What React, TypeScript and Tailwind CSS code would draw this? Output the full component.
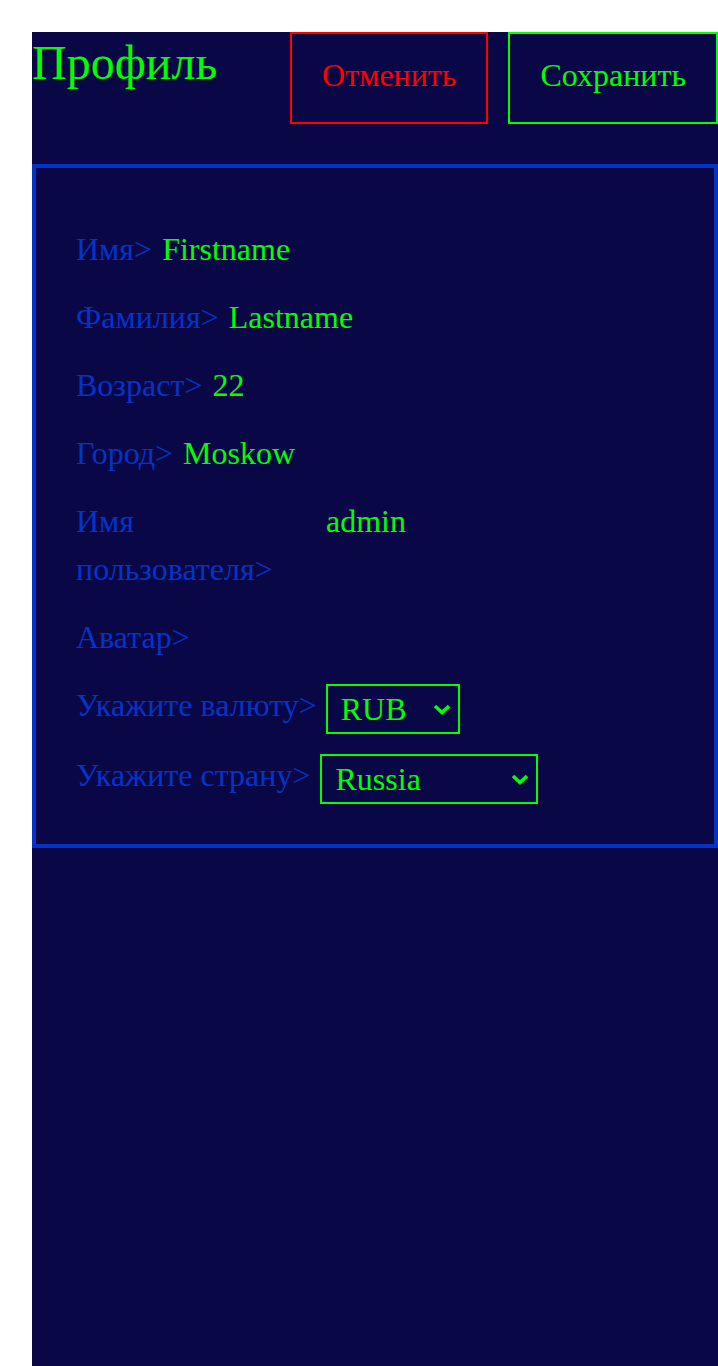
import React from "react";

const serif = { fontFamily: '"Liberation Serif", "Times New Roman", serif' };

function Row({ label, value }: { label: string; value: string }) {
  return (
    <div className="flex gap-[10px] text-[32px] leading-[48px]">
      <span className="text-[#0433c8]">{label}</span>
      <span className="text-[#00ff00]">{value}</span>
    </div>
  );
}

function Chevron() {
  return (
    <svg
      className="pointer-events-none absolute right-[9px] top-1/2 -translate-y-1/2"
      width="18"
      height="12"
      viewBox="0 0 18 12"
      fill="none"
    >
      <path d="M2 3 L9 9.5 L16 3" stroke="#00ff00" strokeWidth="3.6" strokeLinejoin="miter" />
    </svg>
  );
}

function Select({ value, options }: { value: string; options: string[] }) {
  return (
    <div className="relative mt-[3px] flex">
      <select
        defaultValue={value}
        className="h-[50px] appearance-none border-2 border-[#00ff00] pl-[13px] pr-[51px] text-[32px] leading-[36px] text-[#00ff00] outline-none"
      >
        {options.map((o) => (
          <option key={o} value={o} className="bg-[#0a0747]">
            {o}
          </option>
        ))}
      </select>
      <Chevron />
    </div>
  );
}

export default function App() {
  return (
    <div className="bg-white pl-8 pt-8" style={serif}>
      <div className="w-[686px] min-h-[1334px] bg-[#0a0747]">
        <div className="flex items-start justify-between">
          <h1 className="text-[48px] leading-[62px] text-[#00ff00]">Профиль</h1>
          <div className="flex gap-5">
            <button className="h-[92px] border-2 border-[#ff0000] px-[30px] pt-[17px] pb-[23px] text-[32px] leading-[48px] text-[#ff0000]">
              Отменить
            </button>
            <button className="h-[92px] border-2 border-[#00ff00] px-[30px] pt-[17px] pb-[23px] text-[32px] leading-[48px] text-[#00ff00]">
              Сохранить
            </button>
          </div>
        </div>
        <div className="mt-10 border-4 border-[#0433c8] pl-10 pr-10 pt-[57px] pb-10">
          <div className="flex flex-col gap-5">
            <Row label="Имя>" value="Firstname" />
            <Row label="Фамилия>" value="Lastname" />
            <Row label="Возраст>" value="22" />
            <Row label="Город>" value="Moskow" />
            <div className="flex gap-[10px] text-[32px] leading-[48px]">
              <span className="w-[240px] shrink-0 text-[#0433c8]">Имя пользователя&gt;</span>
              <span className="text-[#00ff00]">admin</span>
            </div>
            <div className="flex gap-[10px] text-[32px] leading-[48px]">
              <span className="text-[#0433c8]">Аватар&gt;</span>
            </div>
            <div className="flex items-start gap-[9px] text-[32px] leading-[48px]">
              <span className="text-[#0433c8]">Укажите валюту&gt;</span>
              <Select value="RUB" options={["RUB", "EUR", "USD"]} />
            </div>
            <div className="-mt-[3px] flex items-start gap-[10px] text-[32px] leading-[48px]">
              <span className="text-[#0433c8]">Укажите страну&gt;</span>
              <Select value="Russia" options={["Russia", "Belarus", "Ukraine", "Kazakhstan", "Armenia"]} />
            </div>
          </div>
        </div>
      </div>
    </div>
  );
}
